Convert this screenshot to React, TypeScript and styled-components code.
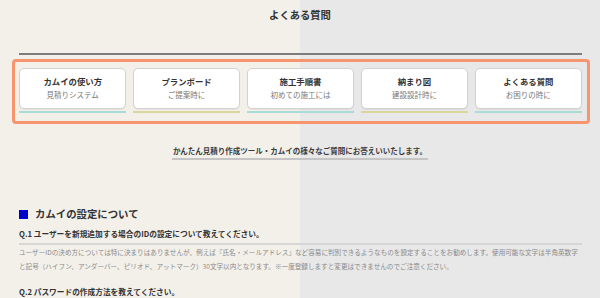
import styled, { createGlobalStyle } from "styled-components";

const GlobalStyle = createGlobalStyle`
  html, body {
    margin: 0;
    padding: 0;
  }
  body {
    width: 600px;
    min-height: 298px;
    overflow: hidden;
    background: linear-gradient(to right, #f3f0ea 0, #f3f0ea 300px, #e8e8e8 300px, #e8e8e8 100%);
    font-family: "Noto Sans CJK JP", "Noto Sans", sans-serif;
    color: #333;
  }
`;

const Page = styled.div`
  width: 600px;
  display: flex;
  flex-direction: column;
`;

const PageTitle = styled.h1`
  margin: 0;
  padding-top: 9px;
  font-size: 10.3px;
  line-height: 12px;
  font-weight: 700;
  text-align: center;
  color: #333;
`;

const Rule = styled.div`
  margin: 32px 18px 0 19px;
  height: 2px;
  background: #7d7d7d;
`;

const MenuBox = styled.nav`
  margin: 4px 10px 0 12px;
  border: 3px solid #f6956e;
  border-radius: 4px;
  padding: 6px 5px 8px 4px;
  display: flex;
  gap: 6.5px;
`;

const MenuItem = styled.a`
  flex: 1;
  display: flex;
  flex-direction: column;
  text-decoration: none;
`;

const Card = styled.div`
  height: 41px;
  box-sizing: border-box;
  background: #fff;
  border: 1px solid #d2d2d2;
  border-radius: 5px;
  box-shadow: 0 1px 1px rgba(0, 0, 0, 0.06);
  padding-top: 6px;
  display: flex;
  flex-direction: column;
  align-items: center;
`;

const CardTitle = styled.div`
  font-size: 8.4px;
  line-height: 12px;
  font-weight: 700;
  color: #333;
`;

const CardSub = styled.div`
  margin-top: 2px;
  font-size: 7.5px;
  line-height: 12px;
  color: #777;
`;

const Accent = styled.div<{ $color: string }>`
  margin-top: 2px;
  height: 2px;
  background: ${(p) => p.$color};
`;

const IntroRow = styled.div`
  margin-top: 21px;
  display: flex;
  justify-content: center;
`;

const Intro = styled.p`
  margin: 0;
  padding: 0 1px 1px;
  font-size: 7.5px;
  line-height: 12px;
  font-weight: 700;
  color: #3a3a3a;
  border-bottom: 2px solid #c4c4c4;
`;

const Section = styled.section`
  margin: 47px 18px 0 19px;
  display: flex;
  flex-direction: column;
`;

const SectionHeading = styled.h2`
  margin: 0;
  display: flex;
  align-items: center;
  gap: 7px;
  font-size: 10.4px;
  line-height: 14px;
  font-weight: 700;
  color: #333;
  &::before {
    content: "";
    width: 9px;
    height: 9px;
    background: #0000cc;
  }
`;

const Question = styled.h3<{ $first?: boolean }>`
  margin: ${(p) => (p.$first ? "7px" : "13px")} 0 0;
  padding-bottom: 3px;
  font-size: 7.7px;
  line-height: 12px;
  font-weight: 700;
  color: #333;
  border-bottom: ${(p) => (p.$first ? "2px solid #d6d6d6" : "none")};
`;

const Answer = styled.p`
  margin: 0;
  font-size: 6.6px;
  line-height: 14px;
  color: #8a8a8a;
`;

const menu = [
  { title: "カムイの使い方", sub: "見積りシステム", color: "#a9dcd6" },
  { title: "プランボード", sub: "ご提案時に", color: "#d8d79e" },
  { title: "施工手順書", sub: "初めての施工には", color: "#a9dcd6" },
  { title: "納まり図", sub: "建設設計時に", color: "#d8d79e" },
  { title: "よくある質問", sub: "お困りの時に", color: "#a9dcd6" },
];

export default function App() {
  return (
    <>
      <GlobalStyle />
      <Page>
        <PageTitle>よくある質問</PageTitle>
        <Rule />
        <MenuBox>
          {menu.map((m) => (
            <MenuItem key={m.title} href="#">
              <Card>
                <CardTitle>{m.title}</CardTitle>
                <CardSub>{m.sub}</CardSub>
              </Card>
              <Accent $color={m.color} />
            </MenuItem>
          ))}
        </MenuBox>
        <IntroRow>
          <Intro>かんたん見積り作成ツール・カムイの様々なご質問にお答えいいたします。</Intro>
        </IntroRow>
        <Section>
          <SectionHeading>カムイの設定について</SectionHeading>
          <Question $first>Q.1 ユーザーを新規追加する場合のIDの設定について教えてください。</Question>
          <Answer>
            ユーザーIDの決め方については特に決まりはありませんが、例えば『氏名・メールアドレス』など容易に判別できるようなものを設定することをお勧めします。使用可能な文字は半角英数字
            <br />
            と記号（ハイフン、アンダーバー、ピリオド、アットマーク）30文字以内となります。※一度登録しますと変更はできませんのでご注意ください。
          </Answer>
          <Question>Q.2 パスワードの作成方法を教えてください。</Question>
        </Section>
      </Page>
    </>
  );
}
